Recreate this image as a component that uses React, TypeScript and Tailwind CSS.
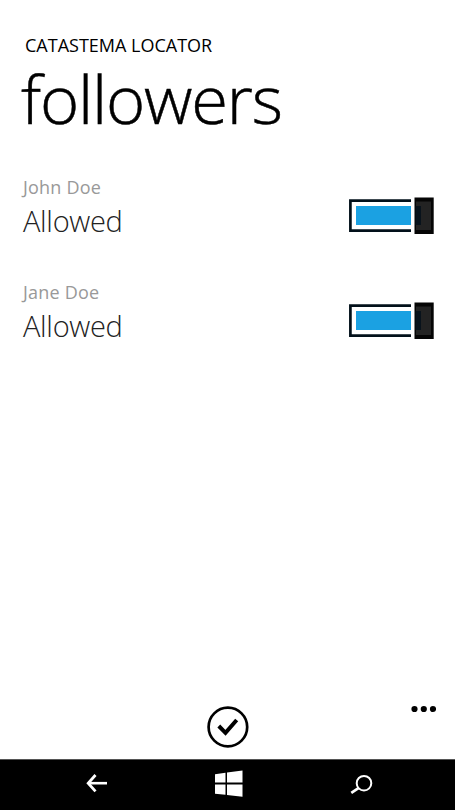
type Follower = { id: number; name: string; status: string };

const FOLLOWERS: Follower[] = [
  { id: 1, name: 'John Doe', status: 'Allowed' },
  { id: 2, name: 'Jane Doe', status: 'Allowed' },
];

function ToggleSwitch() {
  return (
    <svg className="mt-[22px] h-[38px] w-[86px] shrink-0" viewBox="0 0 86 38" role="img">
      <path d="M63 3.6H2.4v30H63" fill="none" stroke="#02101a" strokeWidth="2.7" />
      <rect x="8" y="9" width="55" height="19" fill="#1ba1e2" />
      <rect x="66.5" y="0.5" width="19.2" height="36.5" fill="#050505" />
      <rect x="68" y="4.5" width="15" height="28.5" fill="#232323" />
      <rect x="67.5" y="9" width="5.5" height="19" fill="#08121b" />
    </svg>
  );
}

function FollowerRow({ follower }: { follower: Follower }) {
  return (
    <div className="flex h-[105px] items-start justify-between pl-[23px] pr-[22px]">
      <div>
        <p className="text-[18px] leading-6 tracking-[0.2px] text-[#999]">{follower.name}</p>
        <p className="mt-[4px] text-[29px] font-light leading-9 tracking-[-0.3px] text-[#222]">
          {follower.status}
        </p>
      </div>
      <ToggleSwitch />
    </div>
  );
}

function AppBar() {
  return (
    <div className="grid h-[58px] grid-cols-3">
      <span />
      <button className="-mt-px self-start justify-self-center">
        <svg className="block h-[54px] w-[42px]" viewBox="0 0 42 54" fill="none" stroke="#000">
          <circle cx="20.9" cy="27" r="19.3" strokeWidth="2.7" />
          <path d="M11.8 26l6.7 6.8L29.7 20" strokeWidth="4" />
        </svg>
      </button>
      <button className="mr-[20px] mt-[4px] self-start justify-self-end">
        <svg className="block h-[8px] w-[25px]" viewBox="0 0 25 8" fill="#000">
          <circle cx="3.5" cy="4" r="3.1" />
          <circle cx="12.8" cy="4" r="3.1" />
          <circle cx="22" cy="4" r="3.1" />
        </svg>
      </button>
    </div>
  );
}

function NavBar() {
  return (
    <div className="mr-px flex h-[51px] items-start justify-between border-t border-[#555] bg-black pl-[86px] pr-[82px] pt-[10px]">
      <svg className="h-[28px] w-[22px]" viewBox="0 0 22 28" fill="none" stroke="#fff">
        <path d="M21 13.2H2" strokeWidth="2.6" />
        <path d="M9.5 5L2.2 13.2l7.3 8.2" strokeWidth="2.8" />
      </svg>
      <svg className="h-[28px] w-[28px]" viewBox="0 0 28 28" fill="#fff">
        <path d="M0 4.2l10.5-1.4v9.7H0zM12 2.6L27.5.6v11.9H12zM0 14.5h10.5v10.3L0 23.7zM12 14.5h15.5v12.2L12 25z" />
      </svg>
      <svg className="h-[28px] w-[23px]" viewBox="0 0 23 28" fill="none" stroke="#fff">
        <circle cx="14" cy="13.2" r="7.3" strokeWidth="2" />
        <path d="M8.8 17.8l-7.5 5" strokeWidth="2.7" />
      </svg>
    </div>
  );
}

export default function App() {
  return (
    <div className="flex h-[810px] w-[456px] flex-col overflow-hidden bg-white font-['Open_Sans',sans-serif] text-black">
      <header className="pt-[33px]">
        <p className="pl-[25px] text-[18px] leading-6">CATASTEMA LOCATOR</p>
        <h1 className="mt-[5px] pl-[21px] text-[67px] font-light leading-[72px] tracking-[-1.2px] [-webkit-text-stroke:0.5px_#000]">
          followers
        </h1>
      </header>
      <main className="flex-1 pt-[41px]">
        {FOLLOWERS.map(f => (
          <FollowerRow key={f.id} follower={f} />
        ))}
      </main>
      <AppBar />
      <NavBar />
    </div>
  );
}
